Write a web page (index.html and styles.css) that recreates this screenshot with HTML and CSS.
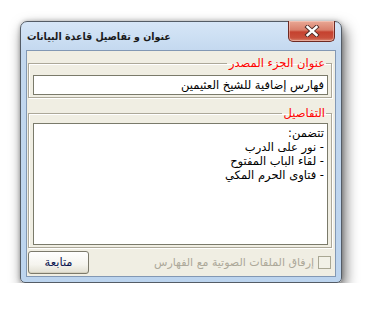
FILE: index.html
```html
<!DOCTYPE html>
<html lang="ar">
<head>
<meta charset="utf-8">
<link rel="stylesheet" href="styles.css">
</head>
<body>
<div class="stage">
  <div class="window">
    <div class="titlebar">
      <div class="title" dir="rtl">عنوان و تفاصيل قاعدة البيانات</div>
      <div class="close">
        <svg width="16" height="12" viewBox="0 0 16 12">
          <path d="M3.5 2 L12.5 10 M12.5 2 L3.5 10" stroke="#4a2a26" stroke-width="4.2" stroke-linecap="square" fill="none"/>
          <path d="M3.5 2 L12.5 10 M12.5 2 L3.5 10" stroke="#ffffff" stroke-width="2.4" stroke-linecap="square" fill="none"/>
        </svg>
      </div>
    </div>
    <div class="client">
      <fieldset class="group group-source" dir="rtl">
        <legend class="legend">عنوان الجزء المصدر</legend>
        <div class="input">فهارس إضافية للشيخ العثيمين</div>
      </fieldset>
      <fieldset class="group group-details" dir="rtl">
        <legend class="legend">التفاصيل</legend>
        <div class="textarea">
          <div class="line">تتضمن:</div>
          <div class="line">- نور على الدرب</div>
          <div class="line">- لقاء الباب المفتوح</div>
          <div class="line">- فتاوى الحرم المكي</div>
        </div>
      </fieldset>
      <div class="footer">
        <div class="button">متابعة</div>
        <label class="check" dir="rtl">
          <span class="box"></span>
          <span class="check-label">إرفاق الملفات الصوتية مع الفهارس</span>
        </label>
      </div>
    </div>
  </div>
</div>
</body>
</html>
```

FILE: styles.css
```css
html, body {
  margin: 0;
  padding: 0;
  background: #ffffff;
}
body {
  font-family: "DejaVu Sans", sans-serif;
  font-size: 11px;
  color: #000;
}
.stage {
  padding: 21px 0 0 20px;
}
.window {
  box-sizing: border-box;
  width: 322px;
  height: 262px;
  border: 1px solid #545c66;
  border-radius: 7px 7px 5px 5px;
  background: linear-gradient(to bottom, #d6e6f7 0px, #c3d8ef 30px, #bcd4ee 100%);
  box-shadow: 3px 6px 14px rgba(0, 0, 0, 0.6), 0 0 4px rgba(0, 0, 0, 0.25);
  display: flex;
  flex-direction: column;
}
.titlebar {
  height: 28px;
  display: flex;
  justify-content: space-between;
  align-items: flex-start;
}
.title {
  font-family: "DejaVu Sans Condensed", "DejaVu Sans", sans-serif;
  font-weight: bold;
  font-size: 10.5px;
  color: #1a1a1a;
  margin: 8px 0 0 6px;
}
.close {
  box-sizing: border-box;
  width: 47px;
  height: 21px;
  margin: -1px 6px 0 0;
  border: 1px solid #6e2a22;
  border-top: none;
  border-radius: 0 0 5px 5px;
  background: linear-gradient(to bottom, #e9a895 0%, #d9806c 45%, #c5412f 55%, #c9503c 85%, #d98a74 100%);
  box-shadow: inset 0 0 0 1px rgba(255, 220, 210, 0.45);
  display: flex;
  align-items: center;
  justify-content: center;
}
.close svg {
  display: block;
}
.client {
  flex: 1;
  margin: 0 5px 5px 5px;
  border: 1px solid #8298b4;
  background: #f0eee3;
  padding: 5px 3px 0 1px;
  display: flex;
  flex-direction: column;
}
.group {
  margin: 0;
  padding: 0 3px 4px 4px;
  border: 1px solid #aca899;
  box-shadow: inset 1px 1px 0 #ffffff, 1px 1px 0 #ffffff;
  min-width: 0;
}
.legend {
  color: #ff0000;
  font-size: 11.5px;
  padding: 0 1px 0 2px;
  margin-right: 2px;
  line-height: 14px;
}
.group-source {
  height: 36px;
}
.group-details {
  margin-top: 8px;
  height: 136px;
}
.input {
  box-sizing: border-box;
  margin-top: 5px;
  height: 20px;
  border: 1px solid #7a7a6a;
  background: #ffffff;
  padding: 2px 3px 0 3px;
  line-height: 15px;
  font-size: 11.5px;
  white-space: nowrap;
}
.textarea {
  box-sizing: border-box;
  margin-top: 3px;
  height: 122px;
  border: 1px solid #7a7a6a;
  background: #ffffff;
  padding: 2px 3px 0 3px;
  font-size: 11.5px;
}
.line {
  line-height: 14px;
  white-space: nowrap;
}
.footer {
  display: flex;
  justify-content: space-between;
  align-items: center;
  margin-top: 3px;
}
.button {
  box-sizing: border-box;
  width: 61px;
  height: 23px;
  border: 1px solid #7c7a6c;
  border-radius: 3px;
  background: linear-gradient(to bottom, #ffffff 0%, #f5f4ee 60%, #e2dfd2 100%);
  box-shadow: inset 0 -1px 0 #d6d2c2;
  color: #0a1450;
  font-size: 11.5px;
  line-height: 21px;
  text-align: center;
}
.check {
  display: flex;
  align-items: center;
  gap: 4px;
  margin-right: 1px;
}
.box {
  box-sizing: border-box;
  width: 13px;
  height: 13px;
  border: 1px solid #a9a793;
  background: #f2f1e7;
}
.check-label {
  color: #aca899;
  font-size: 11px;
  white-space: nowrap;
}
```
